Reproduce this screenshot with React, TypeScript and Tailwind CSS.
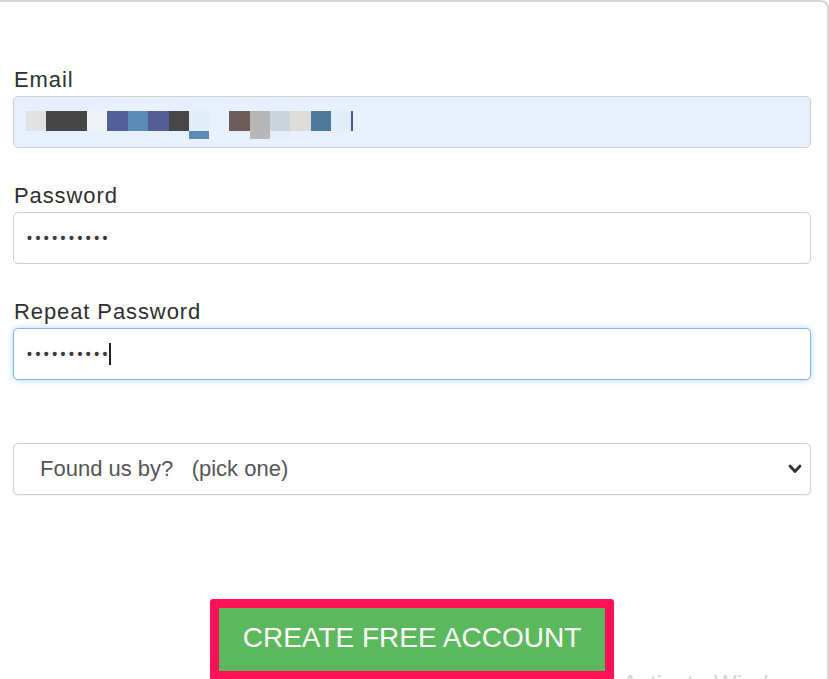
import React from "react";

const blocks: { x: number; w: number; c: string; h?: number; y?: number }[] = [
  { x: 25, w: 20, c: "#e2e2e2" },
  { x: 45, w: 41, c: "#464646" },
  { x: 86, w: 20, c: "#eef2f8" },
  { x: 106, w: 21, c: "#525f98" },
  { x: 127, w: 20, c: "#5b8bb5" },
  { x: 147, w: 21, c: "#535f94" },
  { x: 168, w: 20, c: "#474747" },
  { x: 188, w: 20, c: "#e0ecf6" },
  { x: 188, w: 20, c: "#5a8ab5", y: 20, h: 8 },
  { x: 228, w: 21, c: "#6b5c5a" },
  { x: 249, w: 20, c: "#b7b7b7", h: 28 },
  { x: 269, w: 20, c: "#c9d4dc" },
  { x: 269, w: 20, c: "#e3edf6", y: 20, h: 6 },
  { x: 289, w: 21, c: "#dddcd8" },
  { x: 310, w: 20, c: "#50799c" },
  { x: 330, w: 20, c: "#e0eef8" },
  { x: 350, w: 2, c: "#4a5a8a" },
];

function Label({ children }: { children: React.ReactNode }) {
  return (
    <div className="h-[26px] leading-[26px] text-[22px] tracking-[0.9px] text-[#2f2f2f] mb-[3px] pl-px">
      {children}
    </div>
  );
}

function Dots() {
  return (
    <span className="text-[14px] tracking-[3.5px] text-[#3a3a3a] leading-none font-bold">
      ••••••••••
    </span>
  );
}

export default function App() {
  return (
    <div
      className="relative w-[829px] h-[679px] overflow-hidden bg-white"
      style={{ fontFamily: '"Liberation Sans", Arial, sans-serif' }}
    >
      <div className="w-[829px] h-[720px] border-t-2 border-r-2 border-[#d6d6d6] rounded-tr-[8px] pt-[65px] pl-[13px] pr-[16px]">
        {/* Email */}
        <Label>Email</Label>
        <div className="relative h-[52px] rounded-[5px] border border-[#cfcfcf] bg-[#e8f0fe]">
          <div className="absolute left-0 top-[14px] h-[28px] w-full">
            {blocks.map((b, i) => (
              <div
                key={i}
                className="absolute"
                style={{
                  left: b.x - 13,
                  top: b.y ?? 0,
                  width: b.w,
                  height: b.h ?? 20,
                  background: b.c,
                }}
              />
            ))}
          </div>
        </div>

        {/* Password */}
        <div className="mt-[35px]">
          <Label>Password</Label>
          <div className="h-[52px] rounded-[5px] border border-[#cfcfcf] bg-white flex items-center pl-[13px]">
            <Dots />
          </div>
        </div>

        {/* Repeat Password */}
        <div className="mt-[35px]">
          <Label>Repeat Password</Label>
          <div className="h-[52px] rounded-[5px] border border-[#80b7e3] bg-white flex items-center pl-[13px] shadow-[0_0_6px_rgba(102,175,233,0.55)]">
            <Dots />
            <span className="ml-[-2px] w-[1.5px] h-[22px] bg-[#222]" />
          </div>
        </div>

        {/* Select */}
        <div className="mt-[63px] h-[52px] rounded-[5px] border border-[#cfcfcf] bg-white flex items-center justify-between pl-[26px] pr-[8px] shadow-[0_1px_1px_rgba(0,0,0,0.05)]">
          <span className="text-[22px] text-[#555] whitespace-pre leading-none">
            {"Found us by?   (pick one)"}
          </span>
          <svg width="14" height="10" viewBox="0 0 14 10">
            <polyline
              points="2,2 7,7.5 12,2"
              fill="none"
              stroke="#333"
              strokeWidth="2.8"
              strokeLinecap="round"
              strokeLinejoin="round"
            />
          </svg>
        </div>

        {/* Button */}
        <div className="mt-[104px] flex justify-center">
          <div className="bg-[#fe1157] p-[9px] rounded-[3px]">
            <button className="w-[386px] h-[63px] bg-[#5cb85c] text-white text-[28px] leading-none flex items-center justify-center pb-[4px]">
              CREATE FREE ACCOUNT
            </button>
          </div>
        </div>
      </div>

      {/* Windows watermark */}
      <div className="absolute left-[622px] top-[670px] text-[24px] leading-[28px] text-[#d4d4d4] whitespace-nowrap pointer-events-none">
        Activate Windows
      </div>
    </div>
  );
}
